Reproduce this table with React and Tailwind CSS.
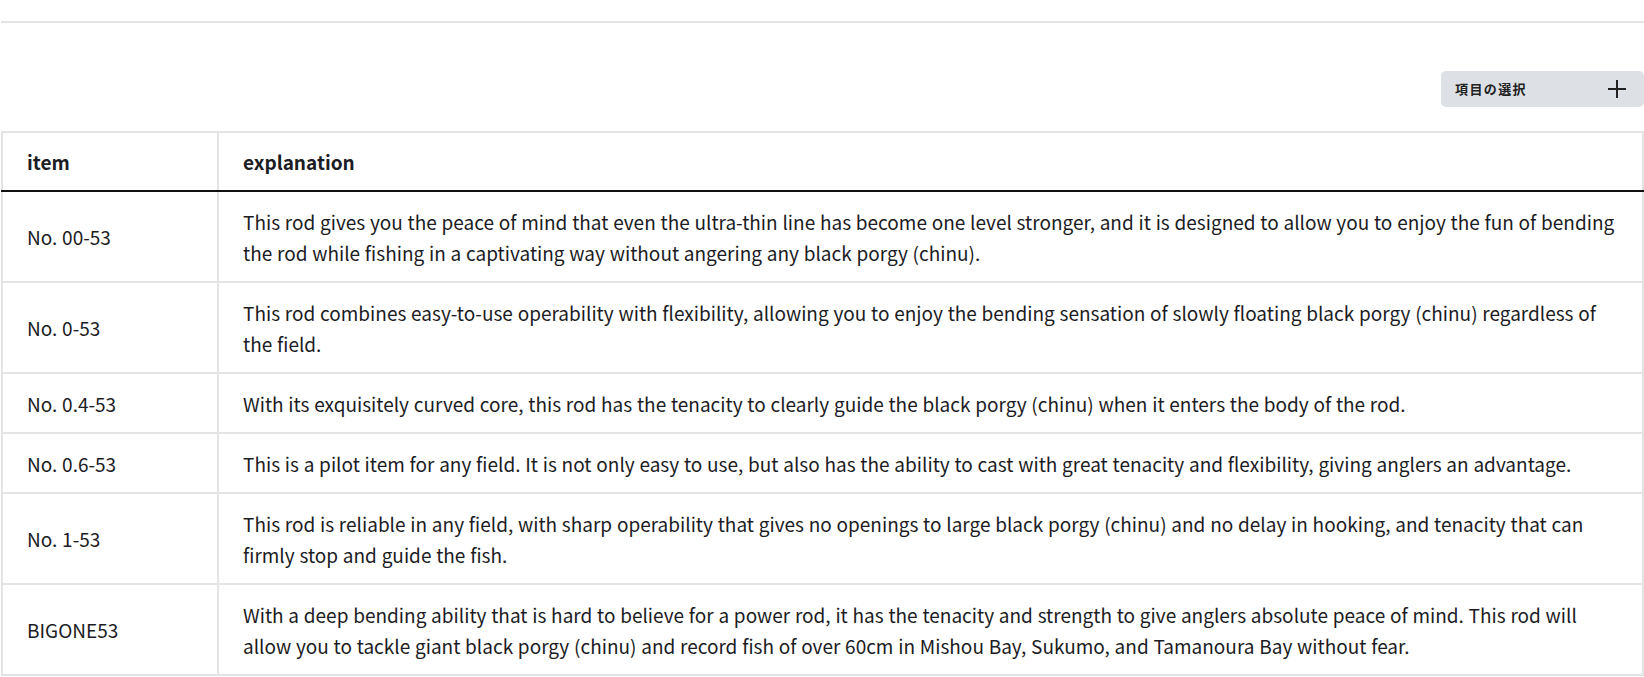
const rows = [
  {
    item: "No. 00-53",
    text: "This rod gives you the peace of mind that even the ultra-thin line has become one level stronger, and it is designed to allow you to enjoy the fun of bending the rod while fishing in a captivating way without angering any black porgy (chinu).",
  },
  {
    item: "No. 0-53",
    text: "This rod combines easy-to-use operability with flexibility, allowing you to enjoy the bending sensation of slowly floating black porgy (chinu) regardless of the field.",
  },
  {
    item: "No. 0.4-53",
    text: "With its exquisitely curved core, this rod has the tenacity to clearly guide the black porgy (chinu) when it enters the body of the rod.",
  },
  {
    item: "No. 0.6-53",
    text: "This is a pilot item for any field. It is not only easy to use, but also has the ability to cast with great tenacity and flexibility, giving anglers an advantage.",
  },
  {
    item: "No. 1-53",
    text: "This rod is reliable in any field, with sharp operability that gives no openings to large black porgy (chinu) and no delay in hooking, and tenacity that can firmly stop and guide the fish.",
  },
  {
    item: "BIGONE53",
    text: "With a deep bending ability that is hard to believe for a power rod, it has the tenacity and strength to give anglers absolute peace of mind. This rod will allow you to tackle giant black porgy (chinu) and record fish of over 60cm in Mishou Bay, Sukumo, and Tamanoura Bay without fear.",
  },
];

const App = () => {
  return (
    <div className="bg-white text-[#1c1c24] font-['Noto_Sans_CJK_JP',sans-serif] min-h-screen">
      <div className="h-[21px]" />
      <div className="ml-[1px] h-[2px] bg-[#e4e4e4]" />

      <div className="flex justify-end pt-[48px] pb-[24px]">
        <button className="w-[203px] h-[36px] bg-[#dde0e5] rounded-[5px] flex items-center justify-between pl-[14px] pr-[17px]">
          <span className="text-[13px] font-bold tracking-[1.4px] text-[#222]">項目の選択</span>
          <svg width="20" height="20" viewBox="0 0 20 20" className="text-[#222]">
            <path d="M10 1v18M1 10h18" stroke="currentColor" strokeWidth="2" />
          </svg>
        </button>
      </div>

      <div className="pl-[1px]">
        <table className="w-full border-collapse border-2 border-[#e4e4e4] text-[19px] leading-[31px] [word-spacing:0.5px]">
          <thead>
            <tr>
              <th className="w-[216px] text-left font-bold px-6 py-[13px] border-2 border-[#e4e4e4] border-b-[#111]">item</th>
              <th className="text-left font-bold px-6 py-[13px] border-2 border-[#e4e4e4] border-b-[#111]">explanation</th>
            </tr>
          </thead>
          <tbody>
            {rows.map((r) => (
              <tr key={r.item}>
                <td className="px-6 py-[13.5px] border-2 border-[#e4e4e4] align-middle">{r.item}</td>
                <td className="pl-6 pr-[26px] py-[13.5px] border-2 border-[#e4e4e4] align-middle">{r.text}</td>
              </tr>
            ))}
          </tbody>
        </table>
      </div>
    </div>
  );
};

export default App;
